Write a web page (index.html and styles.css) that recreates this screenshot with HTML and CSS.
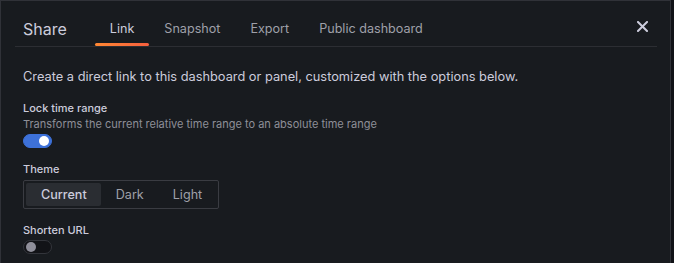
FILE: index.html
```html
<!DOCTYPE html>
<html lang="en">
  <head>
    <meta charset="UTF-8" />
    <meta name="viewport" content="width=device-width, initial-scale=1.0" />
    <title>Share</title>
    <link rel="stylesheet" href="styles.css">
  </head>
  <body>
    <div class="modal">
      <div class="modal-header">
        <h2 class="modal-title">Share</h2>
        <div class="tabs">
          <div class="tab active">Link</div>
          <div class="tab">Snapshot</div>
          <div class="tab">Export</div>
          <div class="tab">Public dashboard</div>
        </div>
        <button class="close-btn" aria-label="Close">
          <svg width="11" height="11" viewBox="0 0 11 11">
            <path d="M1 1 L10 10 M10 1 L1 10" stroke="#ccccdc" stroke-width="2" stroke-linecap="square" fill="none" />
          </svg>
        </button>
      </div>

      <div class="modal-body">
        <p class="intro">Create a direct link to this dashboard or panel, customized with the options below.</p>

        <div class="field">
          <div class="field-label">Lock time range</div>
          <div class="field-desc">Transforms the current relative time range to an absolute time range</div>
          <div class="switch on"><span class="knob"></span></div>
        </div>

        <div class="field">
          <div class="field-label">Theme</div>
          <div class="radio-group">
            <div class="radio active">Current</div>
            <div class="radio">Dark</div>
            <div class="radio">Light</div>
          </div>
        </div>

        <div class="field">
          <div class="field-label">Shorten URL</div>
          <div class="switch"><span class="knob"></span></div>
        </div>
      </div>
    </div>
  </body>
</html>
```

FILE: styles.css
```css
body {
  margin: 0;
  padding: 0;
  background-color: #111217;
  font-family: "Inter", "Noto Sans", sans-serif;
  color: #ccccdc;
  overflow: hidden;
}

.modal {
  width: 669px;
  height: 300px;
  background-color: #181b1f;
  border: 1px solid #303238;
}

/* header with title, tabs and close */
.modal-header {
  display: flex;
  height: 35px;
  padding-top: 10px;
  margin: 0 13px 0 14px;
  border-bottom: 1px solid #2c2e33;
}
.modal-title {
  margin: 0 28px 0 0;
  padding-left: 8px;
  align-self: center;
  font-size: 16px;
  font-weight: 400;
  line-height: 24px;
}
.tabs {
  display: flex;
}
.tab {
  position: relative;
  display: flex;
  align-items: center;
  padding: 0 15px 0 15px;
  font-size: 12.6px;
  color: #9fa0a9;
}
.tab.active {
  color: #ccccdc;
}
.tab.active::after {
  content: "";
  position: absolute;
  left: 0;
  right: 0;
  bottom: 0;
  height: 3px;
  border-radius: 2px;
  background: linear-gradient(90deg, #ff8833, #f55f3e);
}
.close-btn {
  margin: 10px 9px 0 auto;
  align-self: flex-start;
  background: none;
  border: none;
  padding: 0;
  width: 11px;
  height: 11px;
  cursor: pointer;
}
.close-btn svg {
  display: block;
}

/* body */
.modal-body {
  padding: 20px 22px;
}
.intro {
  margin: 0 0 13px;
  font-size: 12.8px;
  line-height: 20px;
}
.field {
  margin-bottom: 13px;
}
.field-label {
  font-size: 11px;
  font-weight: 500;
  line-height: 16px;
}
.field-desc {
  font-size: 11px;
  line-height: 16px;
  color: #8e8f98;
}

.switch {
  display: flex;
  align-items: center;
  box-sizing: border-box;
  width: 29px;
  height: 14px;
  margin-top: 2px;
  padding: 0 2px;
  border-radius: 7px;
  background-color: #121317;
  border: 1px solid #33353b;
}
.switch .knob {
  width: 10px;
  height: 10px;
  border-radius: 50%;
  background-color: #8f8f9a;
}
.switch.on {
  background-color: #3d71d9;
  border-color: #3d71d9;
  justify-content: flex-end;
}
.switch.on .knob {
  background-color: #fff;
}

.radio-group {
  display: inline-flex;
  margin-top: 3px;
  padding: 2px;
  height: 23px;
  border: 1px solid #3a3c42;
  border-radius: 2px;
}
.radio {
  display: flex;
  align-items: center;
  padding: 0 14px 0 15px;
  font-size: 12.6px;
  color: #9fa0a9;
  border-radius: 2px;
}
.radio.active {
  background-color: #2a2d32;
  color: #ccccdc;
  font-weight: 500;
}
```
